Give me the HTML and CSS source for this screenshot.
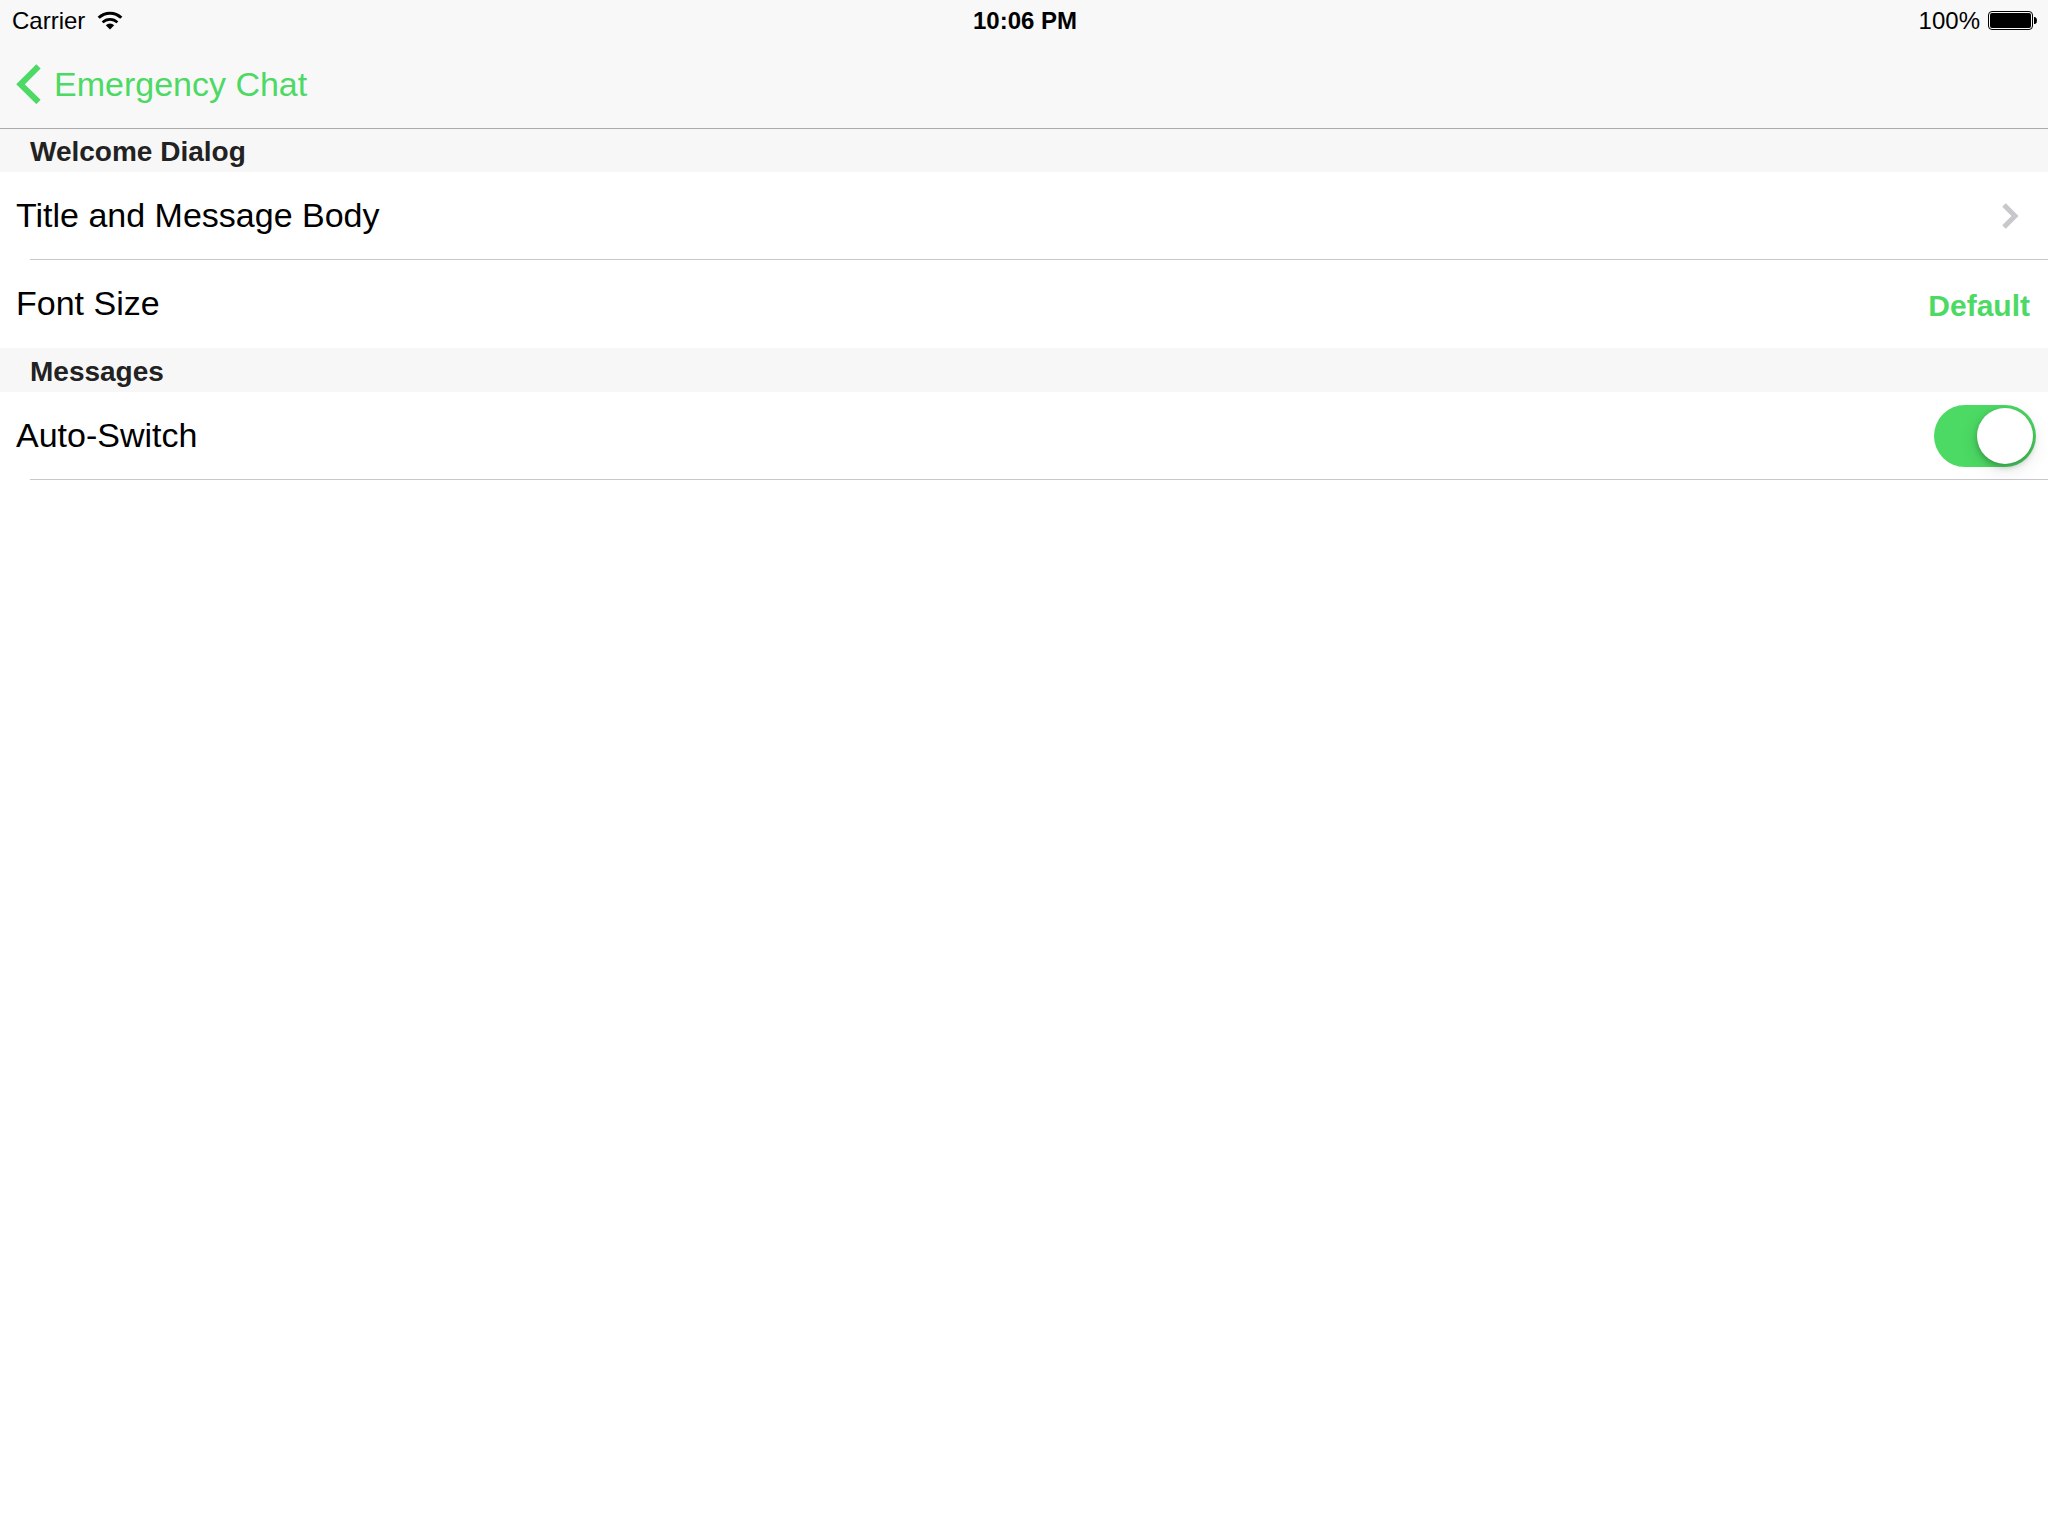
FILE: index.html
```html
<!DOCTYPE html>
<html lang="en">
<head>
  <meta charset="UTF-8" />
  <meta name="viewport" content="width=device-width, initial-scale=1.0"/>
  <title>Emergency Chat Settings</title>
  <link rel="stylesheet" href="styles.css">
</head>
<body>

  <header>
    <div class="status-bar">
      <div class="carrier">
        <span>Carrier</span>
        <svg class="wifi" viewBox="0 0 26 20" aria-hidden="true">
          <path d="M1.700 6.800a16 16 0 0 1 22.600 0" fill="none" stroke="#000" stroke-width="3"/>
          <path d="M5.600 11.400a10.500 10.500 0 0 1 14.800 0" fill="none" stroke="#000" stroke-width="2.600"/>
          <path d="M13 18.500l-4.200-4.200a6 6 0 0 1 8.400 0z"/>
        </svg>
      </div>
      <time>10:06 PM</time>
      <div class="battery">
        <span>100%</span>
        <svg class="battery-icon" viewBox="0 0 50 20" aria-hidden="true">
          <rect x="0.5" y="0.5" width="44" height="18" rx="3.500" fill="none" stroke="#000"/>
          <rect x="2" y="2" width="41" height="15" rx="2"/>
          <path d="M46 6h1q2 .5 2 3.500t-2 3.500h-1z"/>
        </svg>
      </div>
    </div>
    <nav>
      <a href="#" class="back">
        <svg class="back-icon" viewBox="0 0 26 40" aria-hidden="true">
          <path d="M22.500 2.300L4.500 20.300l18 17.700" fill="none" stroke="currentColor" stroke-width="6"/>
        </svg>
        Emergency Chat
      </a>
    </nav>
  </header>

  <main>
    <section>
      <h2>Welcome Dialog</h2>
      <a href="#" class="row">
        <span>Title and Message Body</span>
        <svg class="chevron" viewBox="0 0 18 26" aria-hidden="true">
          <path d="M2 2l11 11L2 24" fill="none" stroke="currentColor" stroke-width="5"/>
        </svg>
      </a>
      <div class="row">
        <span id="font-size-label">Font Size</span>
        <button type="button" class="value" aria-describedby="font-size-label">Default</button>
      </div>
    </section>

    <section>
      <h2>Messages</h2>
      <div class="row">
        <label for="auto-switch">Auto-Switch</label>
        <input type="checkbox" role="switch" id="auto-switch" class="switch" checked>
      </div>
      <hr>
    </section>
  </main>

</body>
</html>
```

FILE: styles.css
```css
* {
  box-sizing: border-box;
}
body {
  margin: 0;
  background: #fff;
  font-family: "Liberation Sans", Arial, sans-serif;
  color: #000;
}

a {
  color: inherit;
  text-decoration: none;
}

/* the hairline is a shadow, so it lies over the first section header */
header {
  position: relative;
  background: #f8f8f8;
  box-shadow: 0 1px 0 #acacac;
}

.status-bar {
  display: grid;
  grid-template-columns: 1fr auto 1fr;
  align-items: center;
  height: 40px;
  padding: 2px 10px 0 12px;
  font-size: 24px;
}

.status-bar time {
  font-weight: bold;
}

.carrier,
.battery {
  display: flex;
  align-items: center;
}

.carrier {
  gap: 12px;
}

.battery {
  justify-content: flex-end;
  gap: 8px;
}

.wifi {
  width: 26px;
  height: 20px;
}

.battery-icon {
  width: 50px;
  height: 20px;
}

nav {
  display: flex;
  height: 88px;
  padding: 0 16px;
}

.back {
  display: flex;
  align-items: center;
  gap: 12px;
  font-size: 34px;
  color: #4cd964;
}

.back-icon {
  width: 26px;
  height: 40px;
}

h2 {
  margin: 0;
  padding: 4px 30px 0;
  font-size: 28px;
  line-height: 40px;
  color: #222;
  background: #f7f7f7;
}

.row {
  display: flex;
  align-items: center;
  justify-content: space-between;
  height: 88px;
  padding: 0 12px 0 16px;
  font-size: 34px;
}

.row span,
.row label {
  padding-bottom: 2px;
}

/* inset hairline under a row */
a.row {
  background: linear-gradient(#c8c7cc, #c8c7cc) 30px 100% / 100% 1px no-repeat;
}

hr {
  height: 1px;
  margin: -1px 0 0 30px;
  border: none;
  background: #c8c7cc;
}

.chevron {
  width: 18px;
  height: 26px;
  margin-right: 16px;
  color: #c7c7cc;
}

.value {
  padding: 4px 6px 0;
  border: none;
  background: none;
  font: bold 30px "Liberation Sans", Arial, sans-serif;
  color: #4cd964;
  cursor: pointer;
}

.switch {
  appearance: none;
  display: flex;
  width: 102px;
  height: 62px;
  margin: 0;
  padding: 3px;
  border-radius: 31px;
  background: #e5e5e5;
  cursor: pointer;
}

.switch::before {
  content: "";
  width: 56px;
  height: 56px;
  border-radius: 50%;
  background: #fff;
  box-shadow: 0 3px 6px rgba(0, 0, 0, 0.25), 0 6px 20px rgba(0, 0, 0, 0.1);
}

.switch:checked {
  justify-content: flex-end;
  background: #4cd964;
}
```
